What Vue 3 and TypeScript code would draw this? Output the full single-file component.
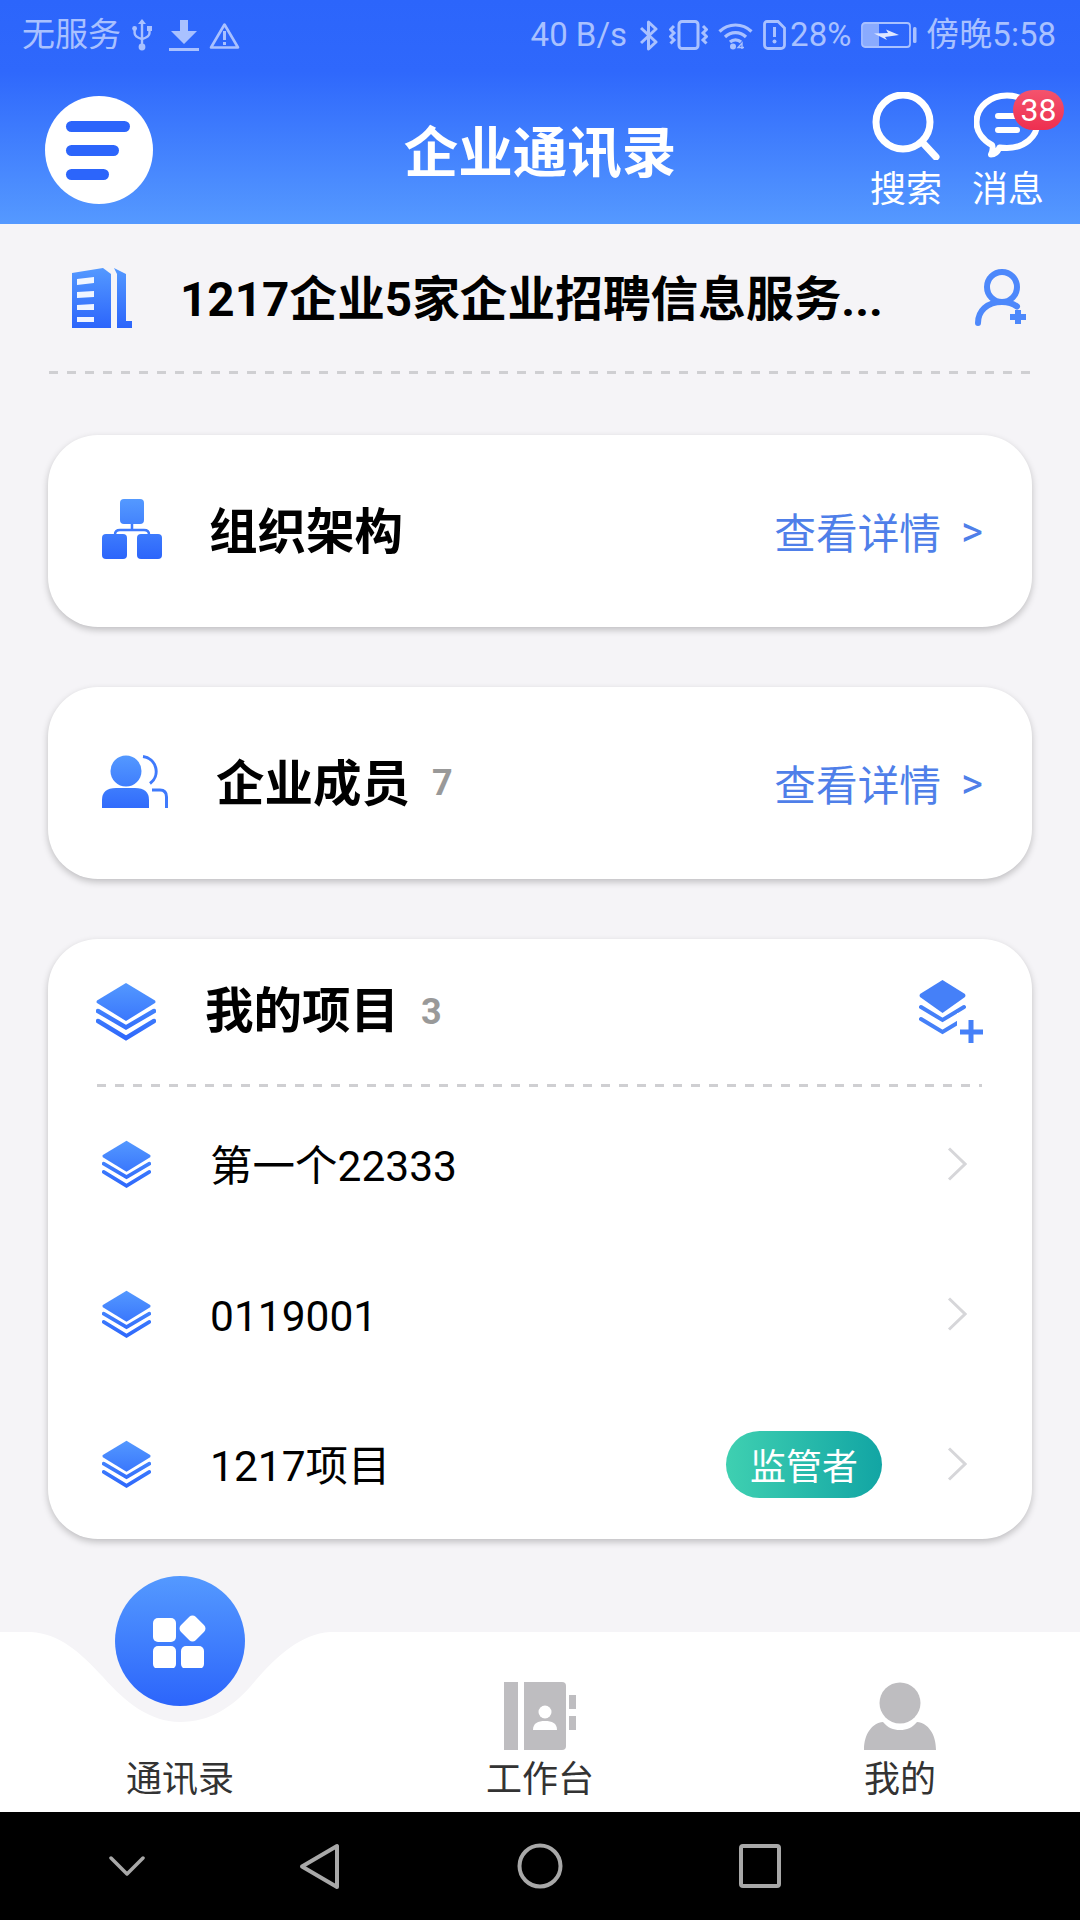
<script setup lang="ts">
interface Project { name: string; role?: string }
const projects: Project[] = [
  { name: '第一个22333' },
  { name: '0119001' },
  { name: '1217项目', role: '监管者' },
]
</script>

<template>
  <div class="app">
    <svg class="defs" width="0" height="0" aria-hidden="true">
      <defs>
        <linearGradient id="gv" gradientUnits="userSpaceOnUse" x1="0" y1="0" x2="0" y2="60">
          <stop offset="0" stop-color="#5499ff" />
          <stop offset="1" stop-color="#2c65fb" />
        </linearGradient>
      </defs>
    </svg>

    <header class="header">
      <div class="status">
        <div class="status-side">
          <span class="st-carrier">无服务</span>
          <svg class="st-usb" width="20" height="32" viewBox="0 0 20 32" fill="none" stroke="currentColor" stroke-width="2.4">
            <path d="M10 3V28" /><path d="M10 0l4 5H6z" fill="currentColor" stroke="none" />
            <circle cx="10" cy="28" r="3.4" fill="currentColor" stroke="none" />
            <circle cx="2.6" cy="9.5" r="2.4" fill="currentColor" stroke="none" />
            <rect x="15" y="7" width="5" height="5" fill="currentColor" stroke="none" />
            <path d="M2.6 11V14Q2.6 18 10 20Q17.5 18 17.5 14V11" />
          </svg>
          <svg class="st-dl" width="30" height="31" viewBox="0 0 30 31" fill="currentColor">
            <path d="M11 0H19V11H28L15 24L2 11H11Z" /><rect y="28" width="30" height="3" />
          </svg>
          <svg class="st-warn" width="31" height="27" viewBox="0 0 31 27" fill="none" stroke="currentColor" stroke-width="2.6">
            <path d="M15.5 2.5L29 25.5H2Z" stroke-linejoin="round" />
            <rect x="14" y="9" width="3" height="9" fill="currentColor" stroke="none" />
            <rect x="14" y="20" width="3" height="3" fill="currentColor" stroke="none" />
          </svg>
        </div>
        <div class="status-side">
          <span>40 B/s</span>
          <svg class="st-bt" width="18" height="31" viewBox="0 0 18 31" fill="none" stroke="currentColor" stroke-width="3" stroke-linejoin="round">
            <path d="M1 8L16 22L8.5 29V2L16 9L1 23" />
          </svg>
          <svg class="st-vib" width="39" height="30" viewBox="0 0 39 30" fill="none" stroke="currentColor" stroke-width="3">
            <rect x="10" y="1.5" width="19" height="27" rx="3" />
            <path d="M5 6L1.500 9.500L5 13L1.500 16.500L5 20L1.500 23.500" />
            <path d="M34 6L37.500 9.500L34 13L37.500 16.500L34 20L37.500 23.500" />
          </svg>
          <svg class="st-wifi" width="35" height="29" viewBox="0 0 35 29" fill="none" stroke="currentColor" stroke-width="3.200">
            <path d="M1.500 10.500A23 23 0 0 1 33.500 10.500" />
            <path d="M7 16A15 15 0 0 1 28 16" />
            <path d="M12 21A8 8 0 0 1 23 21" />
            <circle cx="15" cy="25.500" r="3" fill="currentColor" stroke="none" />
            <path d="M24 28V22L20 26.500H26" stroke-width="1.400" />
          </svg>
          <svg class="st-sim" width="23" height="30" viewBox="0 0 23 30" fill="none" stroke="currentColor" stroke-width="2.800">
            <path d="M4 1.500H15L21.500 8V25A3.500 3.500 0 0 1 18 28.500H5A3.500 3.500 0 0 1 1.500 25V4A2.500 2.500 0 0 1 4 1.500Z" />
            <rect x="10" y="7" width="3" height="10" fill="currentColor" stroke="none" />
            <circle cx="11.500" cy="21.500" r="2" fill="currentColor" stroke="none" />
          </svg>
          <span class="st-pct">28%</span>
          <svg class="st-bat" width="56" height="26" viewBox="0 0 56 26">
            <rect x="1" y="1" width="48" height="24" rx="3" fill="none" stroke="currentColor" stroke-width="1.800" />
            <rect x="2" y="2" width="16" height="22" fill="currentColor" opacity="0.75" />
            <path d="M13 11.500L27 11L25 7.500L38 13L24 15L26 18Z" fill="#dfe7ff" />
            <rect x="52" y="5" width="3.500" height="16" rx="1.500" fill="currentColor" />
          </svg>
          <span class="st-time">傍晚5:58</span>
        </div>
      </div>

      <div class="toolbar">
        <div class="menu-btn">
          <span class="menu-bar bar-1"></span>
          <span class="menu-bar bar-2"></span>
          <span class="menu-bar bar-3"></span>
        </div>
        <h1 class="title">企业通讯录</h1>
        <div class="actions">
          <div class="action">
            <svg width="68" height="68" viewBox="0 0 68 68" fill="none" stroke="#fff" stroke-width="7" stroke-linecap="round">
              <circle cx="31" cy="30" r="27" />
              <path d="M51 51L64 65" />
            </svg>
            <span class="action-label">搜索</span>
          </div>
          <div class="action action-msg">
            <svg width="68" height="68" viewBox="0 0 68 68" fill="none">
              <path d="M33 3.500C50 3.500 63.500 15 63.500 30C63.500 45 50 56 33 56C30 56 28 56 25.500 55.500C24 59 21 62.500 17 62.500C19 59 19 54.500 18 53C9 48.500 2.500 40 2.500 30C2.500 15 16 3.500 33 3.500Z" stroke="#fff" stroke-width="6" stroke-linejoin="round" />
              <path d="M24 24H41M24 38H43" stroke="#fff" stroke-width="6" stroke-linecap="round" />
            </svg>
            <span class="action-label">消息</span>
            <span class="badge">38</span>
          </div>
        </div>
      </div>
    </header>

    <main class="content">
      <div class="company">
        <svg width="60" height="60" viewBox="0 0 60 60" class="company-icon">
          <path d="M0 5L31 0L39 6V60H0Z" fill="url(#gv)" />
          <path d="M42 0L54 6V53H60V60H45V6Z" fill="url(#gv)" />
          <path d="M5 11L22 9V15L5 17ZM5 24L22 23V29L5 30ZM5 37L22 36V42L5 42ZM5 49H22V54H5Z" fill="#fff" opacity="0.92" />
        </svg>
        <span class="company-name">1217企业5家企业招聘信息服务...</span>
        <svg class="company-add" width="54" height="58" viewBox="0 0 54 58" fill="none" stroke="#4d88fb" stroke-width="6" stroke-linecap="round">
          <circle cx="27" cy="18" r="15" />
          <path d="M3 54C3 42 12 33 27 33C33 33 38 34.500 42 37.500" />
          <path d="M43 41V55M35 48H51" stroke-linecap="butt" />
        </svg>
      </div>
      <div class="dash dash-page"></div>

      <section class="card link-card first">
        <svg class="card-icon" width="60" height="60" viewBox="0 0 60 60">
          <rect x="18" width="24" height="25" rx="4" fill="url(#gv)" />
          <rect y="35" width="25" height="25" rx="4" fill="url(#gv)" />
          <rect x="35" y="35" width="25" height="25" rx="4" fill="url(#gv)" />
          <path d="M30 25V31M13 35.500Q13 31 18 31H42Q47 31 47 35.500" fill="none" stroke="#3f7afc" stroke-width="2.500" />
        </svg>
        <span class="card-title org-title">组织架构</span>
        <span class="more">查看详情<i class="more-arrow">&gt;</i></span>
      </section>

      <section class="card link-card">
        <svg class="card-icon" width="66" height="53" viewBox="0 0 66 53">
          <circle cx="24" cy="16" r="15.500" fill="url(#gv)" />
          <path d="M0 53V45Q0 33 14 33H33Q47 33 47 45V53Z" fill="url(#gv)" />
          <path d="M41 1.500A15 15 0 0 1 48 28.500M50 35H58Q64.500 35 64.500 42V53" fill="none" stroke="#3f7afc" stroke-width="3" />
        </svg>
        <span class="card-title member-title">企业成员</span>
        <span class="count">7</span>
        <span class="more">查看详情<i class="more-arrow">&gt;</i></span>
      </section>

      <section class="card project-card">
        <div class="project-head">
          <svg class="stack-big" width="60" height="60" viewBox="0 0 60 60">
            <path d="M30 1L59 18.500Q60 20 59 21L30 39L1 21Q0 20 1 18.500Z" fill="url(#gv)" />
            <path d="M2 29L30 45.500L58 29M2 39L30 56L58 39" fill="none" stroke="url(#gv)" stroke-width="4.500" stroke-linecap="round" />
          </svg>
          <span class="card-title project-title">我的项目</span>
          <span class="count">3</span>
          <svg class="stack-add" width="64" height="64" viewBox="0 0 64 64">
            <path d="M23.500 0L46 14Q47 16 46 17L23.500 33L1 17Q0 16 1 14Z" fill="#4580f8" />
            <path d="M2 27L23.500 40L45 27M2 39L23.500 52L45 39" fill="none" stroke="#4580f8" stroke-width="4" stroke-linecap="round" />
            <rect x="38" y="33" width="26" height="31" fill="#fff" />
            <path d="M52 40V63M41 52H64" fill="none" stroke="#4580f8" stroke-width="5" />
          </svg>
        </div>
        <div class="dash dash-card"></div>
        <ul class="project-list">
          <li v-for="p in projects" :key="p.name" class="project-row">
            <svg class="stack-small" width="49" height="49" viewBox="0 0 60 60">
              <path d="M30 1L59 18.500Q60 20 59 21L30 39L1 21Q0 20 1 18.500Z" fill="url(#gv)" />
              <path d="M2 29L30 45.500L58 29M2 39L30 56L58 39" fill="none" stroke="url(#gv)" stroke-width="4.500" stroke-linecap="round" />
            </svg>
            <span class="project-name">{{ p.name }}</span>
            <span v-if="p.role" class="role">{{ p.role }}</span>
            <svg class="chevron" width="20" height="34" viewBox="0 0 20 34" fill="none" stroke="#d6d6d9" stroke-width="3">
              <path d="M2 1.500L18 17L2 32.500" />
            </svg>
          </li>
        </ul>
      </section>
    </main>

    <nav class="tabbar">
      <svg class="notch" width="360" height="92" viewBox="0 0 360 92">
        <path d="M31 0C60 2 80 20 103 45C125 70 150 90 180 90C210 90 232 75 250 55C275 25 300 2 330 0Z" fill="#f5f4f7" />
      </svg>
      <div class="fab">
        <svg width="54" height="54" viewBox="0 0 54 54" fill="#fff">
          <rect x="0" y="4" width="23" height="24" rx="5" />
          <rect x="0" y="32" width="23" height="23" rx="5" />
          <rect x="28" y="32" width="23" height="23" rx="5" />
          <rect x="29" y="4" width="21" height="21" rx="4.500" transform="rotate(45 39.500 14.500)" />
        </svg>
      </div>
      <div class="tab">
        <span class="tab-label">通讯录</span>
      </div>
      <div class="tab">
        <svg width="72" height="68" viewBox="0 0 72 68" fill="#bebdc0">
          <rect width="14" height="68" />
          <path d="M20 0H58Q62 0 62 4V64Q62 68 58 68H20Z" />
          <rect x="65" y="13" width="7" height="14" />
          <rect x="65" y="34" width="7" height="14" />
          <circle cx="41" cy="30" r="6.500" fill="#fff" />
          <path d="M29 48C29 41 34 39 41 39C48 39 53 41 53 48Z" fill="#fff" />
        </svg>
        <span class="tab-label">工作台</span>
      </div>
      <div class="tab">
        <svg width="72" height="68" viewBox="0 0 72 68" fill="#bebdc0">
          <circle cx="36" cy="21" r="20.500" />
          <path d="M0 68C0 52 8 41 19 40C24 46 29 48 36 48C43 48 48 46 53 40C64 41 72 52 72 68Z" />
        </svg>
        <span class="tab-label">我的</span>
      </div>
    </nav>

    <footer class="sysnav">
      <svg class="sn-down" width="36" height="22" viewBox="0 0 36 22" fill="none" stroke="#a8a8a8" stroke-width="3.500" stroke-linecap="round" stroke-linejoin="round">
        <path d="M2 3L18 19L34 3" />
      </svg>
      <svg class="sn-back" width="42" height="47" viewBox="0 0 42 47" fill="none" stroke="#a8a8a8" stroke-width="4" stroke-linejoin="round">
        <path d="M38 3V44L3 23.500Z" />
      </svg>
      <svg class="sn-home" width="46" height="46" viewBox="0 0 46 46" fill="none" stroke="#a8a8a8" stroke-width="4">
        <circle cx="23" cy="23" r="20.500" />
      </svg>
      <svg class="sn-recent" width="42" height="44" viewBox="0 0 42 44" fill="none" stroke="#a8a8a8" stroke-width="4" stroke-linejoin="round">
        <rect x="2" y="2" width="38" height="40" rx="2" />
      </svg>
    </footer>
  </div>
</template>

<style scoped>
.app {
  width: 1080px;
  height: 1920px;
  display: flex;
  flex-direction: column;
  overflow: hidden;
  background: #f5f4f7;
  font-family: Roboto, "Noto Sans CJK SC", sans-serif;
  color: #000;
}
.defs { display: block; height: 0; }
.header {
  height: 224px;
  flex: none;
  background: linear-gradient(180deg, #2c65fb 0%, #2f68fc 32%, #5599ff 100%);
}
.status {
  height: 70px;
  padding: 0 24px 0 22px;
  display: flex;
  justify-content: space-between;
  align-items: center;
  color: #a9c1ff;
  font-size: 33px;
  line-height: 70px;
}
.status-side { display: flex; align-items: center; }
.st-usb { margin-left: 11px; }
.st-dl { margin-left: 17px; }
.st-warn { margin-left: 10px; }
.st-bt { margin-left: 13px; }
.st-vib { margin-left: 11px; }
.st-wifi { margin-left: 10px; }
.st-sim { margin-left: 10px; }
.st-pct { margin-left: 4px; }
.st-bat { margin-left: 10px; }
.st-time { margin-left: 9px; }

.toolbar {
  height: 154px;
  padding: 0 36px;
  display: grid;
  grid-template-columns: 1fr auto 1fr;
  align-items: center;
}
.menu-btn {
  width: 108px;
  height: 108px;
  margin: 6px 0 0 9px;
  border-radius: 50%;
  background: #fff;
  display: flex;
  flex-direction: column;
  justify-content: center;
  gap: 13px;
  padding-left: 21px;
  box-sizing: border-box;
}
.menu-bar { display: block; height: 11px; border-radius: 6px; background: #2c65fb; }
.bar-1 { width: 64px; }
.bar-2 { width: 53px; }
.bar-3 { width: 43px; }
.title {
  margin: 12px 0 0;
  font-size: 54.5px;
  font-weight: 700;
  line-height: 70px;
  color: #fff;
}
.actions {
  justify-self: end;
  display: flex;
  gap: 30px;
  padding-top: 9px;
}
.action {
  position: relative;
  width: 72px;
  display: flex;
  flex-direction: column;
  align-items: center;
}
.action-label {
  margin-top: 8px;
  font-size: 36px;
  line-height: 44px;
  color: #fff;
  white-space: nowrap;
}
.badge {
  position: absolute;
  top: -2px;
  left: 41px;
  width: 51px;
  height: 40px;
  border-radius: 20px;
  background: linear-gradient(180deg, #f4536d, #ee2f50);
  color: #fff;
  font-size: 32px;
  line-height: 40px;
  text-align: center;
}

.content { flex: 1; min-height: 0; }
.company {
  height: 147px;
  padding: 0 51px 0 72px;
  display: flex;
  align-items: center;
}
.company-name {
  margin: -5px 0 0 48px;
  font-size: 47.7px;
  font-weight: 700;
  white-space: nowrap;
  flex: 1;
}
.dash { height: 3px; background: repeating-linear-gradient(90deg, #cfcfd2 0 9px, transparent 9px 18px); }
.dash-page { margin: 0 49px; }
.dash-card { margin: 0 50px 0 49px; }

.card {
  margin: 60px 48px 0;
  background: #fff;
  border-radius: 50px;
  box-shadow: 0 3px 7px rgba(0, 0, 0, 0.22);
}
.first { margin-top: 61px; }
.link-card {
  height: 192px;
  padding: 0 49px 0 54px;
  box-sizing: border-box;
  display: flex;
  align-items: center;
}
.card-icon { flex: none; margin-top: -4px; }
.card-title { font-size: 48.5px; font-weight: 700; line-height: 60px; }
.org-title { margin: 4px 0 0 47px; }
.member-title { margin: 4px 0 0 48px; }
.count { margin-left: 22px; font-size: 36px; font-weight: 700; color: #999; }
.more {
  margin-left: auto;
  display: flex;
  align-items: center;
  font-size: 41.7px;
  color: #4f7fe9;
}
.more-arrow { margin-left: 20px; font-style: normal; font-size: 42px; }

.project-card { height: 600px; }
.project-head {
  height: 145px;
  padding: 0 49px 0 48px;
  display: flex;
  align-items: center;
}
.project-title { margin-left: 49px; }
.stack-add { margin-left: auto; }
.project-list { margin: 2px 0 0; padding: 0; list-style: none; }
.project-row {
  height: 150px;
  padding: 0 65px 0 54px;
  display: flex;
  align-items: center;
}
.project-name { margin: 5px 0 0 59px; font-size: 42.5px; line-height: 56px; }
.role {
  margin-left: auto;
  width: 156px;
  height: 67px;
  border-radius: 34px;
  background: linear-gradient(90deg, #3fd0b1, #12a5a4);
  color: #fff;
  font-size: 36px;
  line-height: 75px;
  text-align: center;
}
.chevron { margin-left: 65px; }
.project-row:not(:has(.role)) .chevron { margin-left: auto; }

.tabbar {
  position: relative;
  height: 180px;
  flex: none;
  background: #fff;
  display: grid;
  grid-template-columns: repeat(3, 360px);
}
.notch { position: absolute; left: 0; top: 0; }
.fab {
  position: absolute;
  left: 115px;
  top: -56px;
  width: 130px;
  height: 130px;
  border-radius: 50%;
  background: linear-gradient(180deg, #5499ff, #2c65fb);
  display: flex;
  align-items: center;
  justify-content: center;
}
.tab {
  position: relative;
  display: flex;
  flex-direction: column;
  align-items: center;
  justify-content: flex-end;
  padding-bottom: 7px;
}
.tab-label {
  margin-top: 5px;
  font-size: 36px;
  line-height: 50px;
  color: #333;
}
.sysnav {
  height: 108px;
  flex: none;
  box-sizing: border-box;
  padding-left: 109px;
  background: #000;
  display: flex;
  align-items: center;
}
.sn-back { margin-left: 154px; }
.sn-home { margin-left: 176px; }
.sn-recent { margin-left: 176px; }
</style>
